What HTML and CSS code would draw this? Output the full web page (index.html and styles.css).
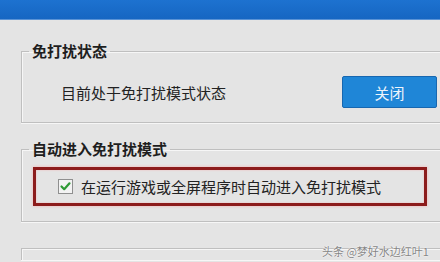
FILE: index.html
```html
<!DOCTYPE html>
<html lang="zh-CN">
<head>
<meta charset="utf-8">
<link rel="stylesheet" href="styles.css">
</head>
<body>
<div class="titlebar"></div>
<fieldset class="group g1">
  <legend class="legend">免打扰状态</legend>
  <div class="row">
    <span class="status">目前处于免打扰模式状态</span>
    <button class="btn">关闭</button>
  </div>
</fieldset>
<fieldset class="group g2">
  <legend class="legend">自动进入免打扰模式</legend>
  <div class="highlight">
    <span class="check"><svg width="15" height="15" viewBox="0 0 15 15"><rect x="0.5" y="0.5" width="14" height="14" fill="#f3f3f3" stroke="#8f8f8f"/><path d="M3.5 7.5 L6.2 10.2 L11.5 4.3" fill="none" stroke="#2f9a35" stroke-width="2.2" stroke-linecap="round" stroke-linejoin="round"/></svg></span>
    <span class="label">在运行游戏或全屏程序时自动进入免打扰模式</span>
  </div>
</fieldset>
<div class="group g3"></div>
<div class="watermark">头条 @梦好水边红叶1</div>
</body>
</html>
```
FILE: styles.css
```css
html, body {
  margin: 0;
  padding: 0;
  overflow: hidden;
}
body {
  width: 440px;
  height: 262px;
  background: #e4e4e4;
  font-family: "Noto Sans CJK SC", "Noto Sans", sans-serif;
  color: #222;
  font-size: 15px;
  position: relative;
}
.titlebar {
  height: 19px;
  background: linear-gradient(#1d72d0, #1666c2);
  border-bottom: 1px solid #5a93d6;
}
.group {
  margin: 0 0 0 21px;
  padding: 0;
  border: 1px solid #bfbfbf;
  border-right: none;
  box-shadow: inset 1px 1px 0 #f6f6f6, 0 1px 0 #f6f6f6;
  min-width: 0;
}
.g1 {
  margin-top: 21px;
  padding: 15px 0 14px;
}
.g2 {
  margin-top: 16px;
  padding: 8px 0 15px;
}
.g3 {
  margin-top: 26px;
  height: 11px;
  border-bottom: none;
}
.legend {
  margin-left: 7px;
  padding: 0 3px;
  height: 20px;
  line-height: 20px;
  font-weight: bold;
  font-size: 15px;
  color: #1e1e1e;
}
.row {
  display: flex;
  align-items: center;
  padding-left: 39px;
}
.status {
  width: 281px;
}
.btn {
  width: 95px;
  height: 32px;
  background: #1f86d7;
  border: 1px solid #1767b0;
  border-radius: 2px;
  color: #eef4fb;
  font-family: "Noto Sans CJK SC", sans-serif;
  font-size: 15px;
  padding: 0;
}
.highlight {
  margin-left: 11px;
  width: 366px;
  height: 33px;
  border: 3px solid #8c1b1b;
  box-shadow: 0 0 3px #f3b3b3, inset 0 0 2px #f3b3b3;
  display: flex;
  align-items: center;
  padding-left: 22px;
  box-sizing: content-box;
}
.check {
  display: flex;
  width: 15px;
  height: 15px;
}
.label {
  margin-left: 8px;
}
.watermark {
  position: absolute;
  left: 322px;
  top: 243px;
  font-size: 11px;
  color: #858585;
  text-shadow: 0 0 1px #fff, 0 0 2px #fff;
  white-space: nowrap;
}
```
